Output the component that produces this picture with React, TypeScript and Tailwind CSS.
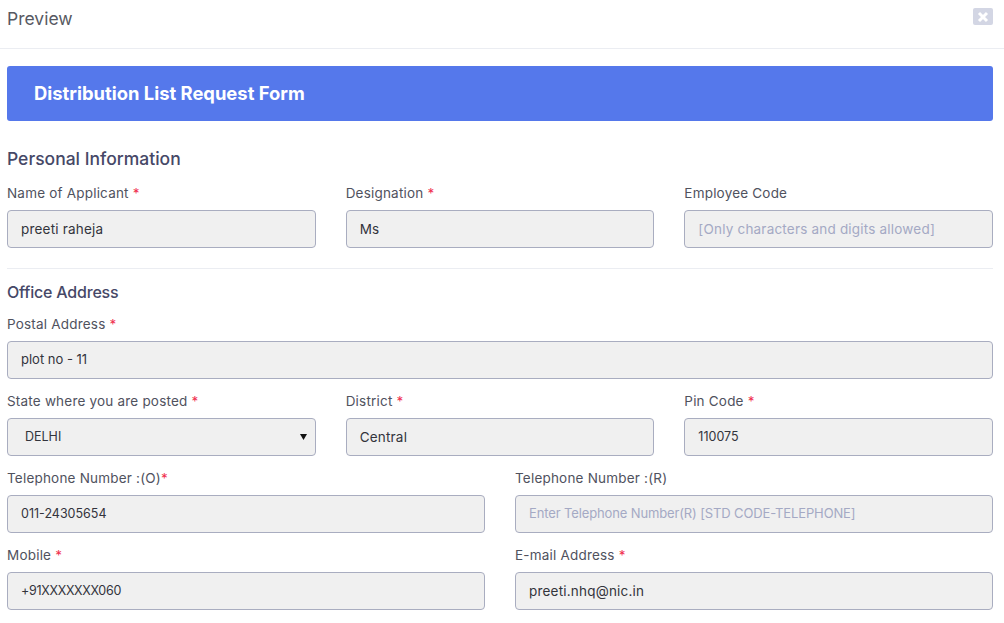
const FONT = "font-['Inter','Noto_Sans',sans-serif]";

function Label({ text, req, tight }: { text: string; req?: boolean; tight?: boolean }) {
  return (
    <div className="h-[27px] text-[13.5px] tracking-[0.2px] leading-[20px] text-[#50525e] whitespace-nowrap">
      {text}
      {req && <span className="text-[#f0324f]">{tight ? "*" : " *"}</span>}
    </div>
  );
}

function Field({
  label,
  value,
  placeholder,
  req,
  tight,
  textClass = "text-[13.5px] tracking-[0.2px]",
}: {
  label: string;
  value?: string;
  placeholder?: string;
  req?: boolean;
  tight?: boolean;
  textClass?: string;
}) {
  return (
    <div className="h-[77px]">
      <Label text={label} req={req} tight={tight} />
      <div
        className={`h-[38px] flex items-center px-[13px] bg-[#f0f0f0] border border-[#a9adc0] rounded-[4px] whitespace-nowrap overflow-hidden ${textClass}`}
      >
        {value ? (
          <span className="text-[#33343c]">{value}</span>
        ) : (
          <span className="text-[#a4a9c4]">{placeholder}</span>
        )}
      </div>
    </div>
  );
}

export default function App() {
  return (
    <div className={`${FONT} w-[1004px] h-[623px] overflow-hidden bg-white`}>
      <div className="h-[49px] border-b border-[#ebedf2] pl-[7px] pr-[11px] flex items-start justify-between">
        <div className="mt-[7px] text-[17.5px] leading-[24px] text-[#575962]">Preview</div>
        <div className="mt-[8px] w-[20px] h-[17px] rounded-[2px] bg-[#d3d6e4] flex items-center justify-center">
          <svg width="12" height="12" viewBox="0 0 12 12">
            <path d="M2 2 L10 10 M10 2 L2 10" stroke="#ffffff" strokeWidth="3" />
          </svg>
        </div>
      </div>

      <div className="px-[7px] w-[1000px]">
        <div className="mt-[17px] h-[55px] bg-[#5578eb] rounded-[3px] flex items-center pl-[27px] pt-[1px] text-[18.4px] font-bold text-white">
          Distribution List Request Form
        </div>

        <div className="mt-[25px] h-[26px] text-[17.5px] leading-[26px] font-medium text-[#464867]">
          Personal Information
        </div>
        <div className="mt-[11px] grid grid-cols-3 gap-x-[30px]">
          <Field label="Name of Applicant" value="preeti raheja" req />
          <Field label="Designation" value="Ms" req />
          <Field label="Employee Code" placeholder="[Only characters and digits allowed]" />
        </div>

        <div className="mt-[8px] border-t border-[#ebedf2]" />

        <div className="mt-[10px] h-[26px] text-[16px] tracking-[-0.2px] leading-[26px] font-medium text-[#464867]">
          Office Address
        </div>
        <div className="mt-[9px]">
          <Field label="Postal Address" value="plot no - 11" req textClass="text-[13px]" />
        </div>
        <div className="grid grid-cols-3 gap-x-[30px]">
          <div className="h-[77px]">
            <Label text="State where you are posted" req />
            <div className="h-[38px] flex items-center justify-between pl-[17px] pr-[8px] bg-[#f0f0f0] border border-[#a9adc0] rounded-[4px] text-[12.5px] text-[#33343c]">
              DELHI
              <svg width="7" height="6" viewBox="0 0 7 6">
                <path d="M0 0 H7 L3.5 6 Z" fill="#111111" />
              </svg>
            </div>
          </div>
          <Field label="District" value="Central" req />
          <Field label="Pin Code" value="110075" req textClass="text-[12.5px]" />
        </div>
        <div className="grid grid-cols-2 gap-x-[30px]">
          <Field label="Telephone Number :(O)" value="011-24305654" req tight textClass="text-[12.5px]" />
          <Field
            label="Telephone Number :(R)"
            placeholder="Enter Telephone Number(R) [STD CODE-TELEPHONE]"
            textClass="text-[13px] tracking-[-0.13px]"
          />
          <Field label="Mobile" value="+91XXXXXXX060" req textClass="text-[12.5px] tracking-[-0.3px]" />
          <Field label="E-mail Address" value="preeti.nhq@nic.in" req />
        </div>
      </div>
    </div>
  );
}
